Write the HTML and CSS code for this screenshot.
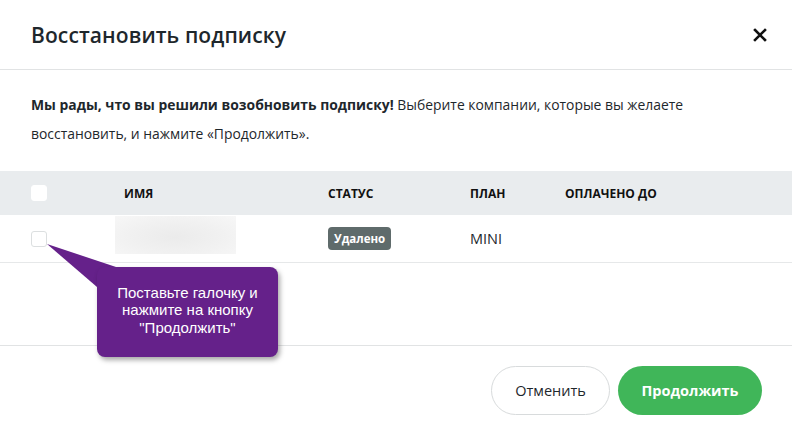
FILE: index.html
```html
<!DOCTYPE html>
<html lang="ru">
<head>
  <meta charset="UTF-8" />
  <meta name="viewport" content="width=device-width, initial-scale=1.0"/>
  <title>Восстановить подписку</title>
  <link rel="stylesheet" href="styles.css">
</head>
<body>

<div class="modal">
  <div class="modal-head">
    <h2>Восстановить подписку</h2>
    <button class="close" type="button" aria-label="Закрыть">
      <svg width="14" height="14" viewBox="0 0 14 14"><path d="M2 2 L12 12 M12 2 L2 12" stroke="#111" stroke-width="2.6" stroke-linecap="square"/></svg>
    </button>
  </div>

  <div class="modal-body">
    <p><b>Мы рады, что вы решили возобновить подписку!</b> <span>Выберите компании, которые вы желаете</span><br><span>восстановить, и нажмите «Продолжить».</span></p>
  </div>

  <div class="table">
    <div class="tr th">
      <span class="check"></span>
      <span>ИМЯ</span>
      <span>СТАТУС</span>
      <span>ПЛАН</span>
      <span>ОПЛАЧЕНО ДО</span>
    </div>
    <div class="tr">
      <span class="check"></span>
      <span><span class="blur"></span></span>
      <span><span class="badge">Удалено</span></span>
      <span class="plan">MINI</span>
      <span></span>
    </div>
  </div>

  <div class="spacer"></div>

  <div class="modal-foot">
    <button class="btn btn-cancel" type="button">Отменить</button>
    <button class="btn btn-ok" type="button">Продолжить</button>
  </div>

  <svg class="tail" width="80" height="50" viewBox="0 0 80 50"><polygon points="0,1 72,25 50,44" fill="#65218a"/></svg>
  <div class="hint">Поставьте галочку и<br>нажмите на кнопку<br>"Продолжить"</div>
</div>

</body>
</html>
```

FILE: styles.css
```css
body {
  margin: 0;
  padding: 0;
  background: #fff;
  font-family: "Open Sans", "Noto Sans", sans-serif;
  color: #1e272c;
}
.modal {
  position: relative;
  width: 792px;
  height: 432px;
  background: #fff;
}
.modal-head {
  display: flex;
  align-items: center;
  justify-content: space-between;
  height: 69px;
  padding: 0 21px 0 31px;
  border-bottom: 1px solid #e1e3e4;
}
.modal-head h2 {
  margin: 0;
  font-size: 21px;
  font-weight: 600;
  letter-spacing: 0.1px;
}
.close {
  border: none;
  background: none;
  padding: 4px;
  cursor: pointer;
  display: flex;
}
.modal-body {
  padding: 20px 31px 23px;
}
.modal-body p {
  margin: 0;
  font-size: 13.9px;
  line-height: 29px;
}
.modal-body b {
  font-weight: 700;
}
.tr {
  display: grid;
  grid-template-columns: 93px 204px 142px 95px 1fr;
  align-items: center;
  padding-left: 31px;
  height: 47px;
  border-bottom: 1px solid #e6e8e9;
  font-size: 14.5px;
}
.th {
  height: 44px;
  background: #e9ecee;
  border-bottom: none;
  font-size: 12px;
  font-weight: 700;
  color: #111;
}
.check {
  width: 14px;
  height: 14px;
  border: 1px solid #dcdfe0;
  border-radius: 3px;
  background: #fff;
}
.th .check {
  border-color: #fff;
}
.blur {
  display: block;
  margin-left: -9px;
  width: 121px;
  height: 38px;
  margin-top: -8px;
  background: radial-gradient(ellipse at 50% 55%, #ebebeb 0%, #f1f1f1 55%, #f7f7f7 100%);
}
.badge {
  display: inline-block;
  background: #5f6b6b;
  color: #fff;
  font-size: 11.5px;
  font-weight: 700;
  padding: 4px 6px;
  border-radius: 4px;
  line-height: 15px;
}
.plan {
  color: #1e272c;
}
.spacer {
  height: 82px;
  border-bottom: 1px solid #e1e3e4;
}
.modal-foot {
  display: flex;
  justify-content: flex-end;
  gap: 8px;
  padding: 20px 30px;
}
.btn {
  height: 49px;
  border-radius: 25px;
  font-family: inherit;
  font-size: 14.5px;
  cursor: pointer;
}
.btn-cancel {
  width: 119px;
  background: #fff;
  border: 1px solid #d8dbdc;
  color: #1e272c;
}
.btn-ok {
  width: 144px;
  background: #40b659;
  border: none;
  color: #fff;
  font-weight: 700;
}
.tail {
  position: absolute;
  left: 47px;
  top: 243px;
}
.hint {
  position: absolute;
  left: 97px;
  top: 267px;
  width: 181px;
  height: 90px;
  padding-bottom: 4px;
  box-sizing: border-box;
  display: flex;
  align-items: center;
  justify-content: center;
  text-align: center;
  background: #65218a;
  color: #fff;
  border-radius: 8px;
  box-shadow: 2px 3px 5px rgba(0,0,0,0.35);
  font-family: "Liberation Sans", Arial, sans-serif;
  font-size: 15px;
  line-height: 17.5px;
}
```
